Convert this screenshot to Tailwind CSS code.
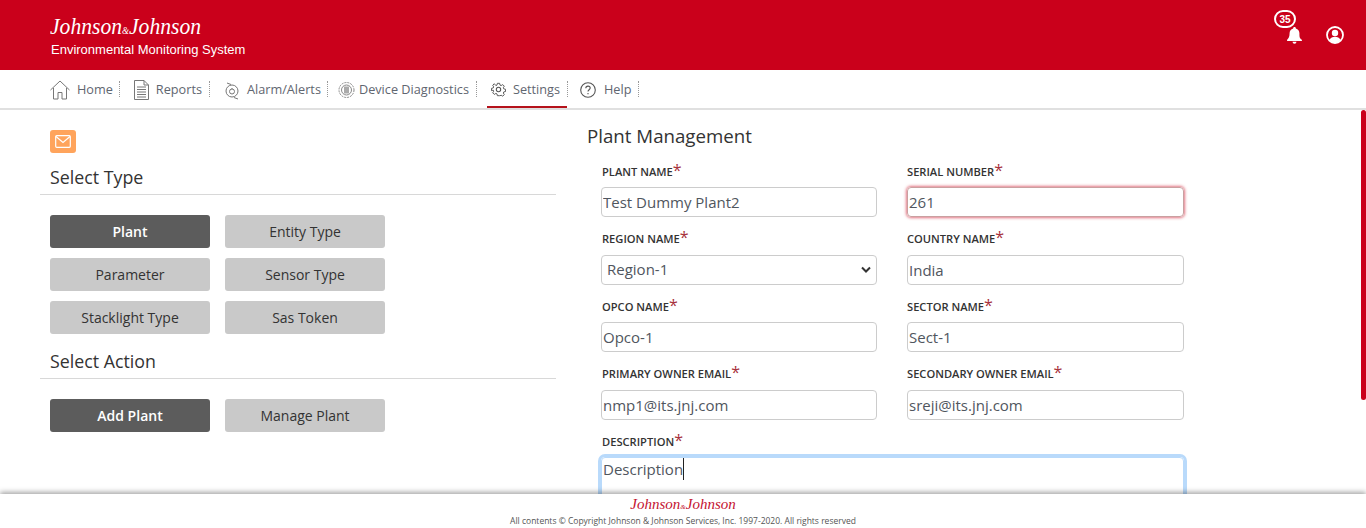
<!DOCTYPE html>
<html lang="en">
<head>
  <meta charset="UTF-8">
  <title>Environmental Monitoring System</title>
  <script src="https://cdn.jsdelivr.net/npm/@tailwindcss/browser@4"></script>
</head>
<body class="relative h-[528px] overflow-hidden bg-white font-['Open_Sans',sans-serif] text-[#333]">
  <!-- Header -->
  <header class="flex h-[70px] items-start justify-between bg-[#ca001b] pl-[50px] text-white">
    <div>
      <div class="mt-[10px] h-[32px] origin-left scale-x-[0.9] whitespace-nowrap font-['Liberation_Serif',serif] text-[24px] leading-[32px] italic">Johnson<span class="text-[10px]">&amp;</span>Johnson</div>
      <div class="ml-[1px] mt-[1px] font-['Liberation_Sans',sans-serif] text-[13px] leading-[14px]">Environmental Monitoring System</div>
    </div>
    <div class="relative mr-[22px] mt-[26px] flex items-center gap-[23px]">
      <span class="absolute left-[-12px] top-[-16px] flex h-[18px] w-[22px] items-center justify-center rounded-full border-2 border-white bg-[#ca001b] font-['Liberation_Sans',sans-serif] text-[10px] font-bold">35</span>
      <svg width="17" height="17" viewBox="0 0 18 19" fill="#fff"><path d="M9 0c-1 0-1.500.7-1.500 1.600C5 2.300 3.500 4.500 3.500 7c0 4-1 5.500-2.700 7.300-.5.600-.1 1.400.7 1.400h15c.8 0 1.200-.8.700-1.400C14.500 12.500 14.500 11 14.500 7c0-2.500-1.500-4.700-4-5.400C10.500.7 10 0 9 0zM6.800 16.500a2.200 2.200 0 0 0 4.400 0z"/></svg>
      <svg width="18" height="18" viewBox="0 0 18 18"><circle cx="9" cy="9" r="8" fill="none" stroke="#fff" stroke-width="1.800"/><circle cx="9" cy="7" r="3.200" fill="#fff"/><path d="M3.500 14c1-2.500 3-3.200 5.500-3.200s4.500.7 5.500 3.200C13 15.800 11 16.500 9 16.500S5 15.800 3.500 14z" fill="#fff"/></svg>
    </div>
  </header>

  <!-- Nav -->
  <nav class="flex h-[40px] items-center border-b-2 border-[#e0e0e0] pl-[50px] text-[12.7px] text-[#5f6670]">
    <a class="flex h-[38px] items-center gap-[7px] pt-[1px]">
      <svg width="20" height="20" viewBox="0 0 20 20" fill="none" stroke="#777" stroke-width="1"><path d="M.5 10 10 1l9.500 9M3.500 8v11h4.500v-6.500h4V19h4.500V8"/></svg>
      <span>Home</span>
    </a>
    <span class="ml-[6px] mr-[14px] h-[16px] border-r border-dotted border-[#999]"></span>
    <a class="flex h-[38px] items-center gap-[7px] pt-[1px]">
      <svg width="15" height="20" viewBox="0 0 15 20" fill="none" stroke="#777" stroke-width="1"><path d="M.5.500h9.500l4.500 4.500v14.500H.5zM10 .5V5h4.500M3 7h9M3 9.500h9M3 12h9M3 14.500h9M3 17h9"/></svg>
      <span>Reports</span>
    </a>
    <span class="ml-[7px] mr-[14px] h-[16px] border-r border-dotted border-[#999]"></span>
    <a class="flex h-[38px] items-center gap-[7px] pt-[1px]">
      <svg width="16" height="20" viewBox="0 0 16 20" fill="none" stroke="#777" stroke-width="1"><circle cx="8" cy="11" r="6"/><circle cx="8" cy="11.500" r="2.500"/><path d="M3 3l4 1.500M10 17.500l4 1.500M8 8v1"/></svg>
      <span>Alarm/Alerts</span>
    </a>
    <span class="ml-[6px] mr-[10px] h-[16px] border-r border-dotted border-[#999]"></span>
    <a class="flex h-[38px] items-center gap-[4px] pt-[1px]">
      <svg width="17" height="18" viewBox="0 0 17 18" fill="none" stroke="#888" stroke-width="1"><circle cx="8.500" cy="9" r="7.500" stroke-dasharray="2 1"/><circle cx="8.500" cy="9" r="5"/><rect x="6" y="5.500" width="5" height="7" fill="#aaa" stroke="none"/></svg>
      <span>Device Diagnostics</span>
    </a>
    <span class="ml-[7px] mr-[10px] h-[16px] border-r border-dotted border-[#999]"></span>
    <a class="relative flex h-[38px] items-center gap-[7px] pl-[4px] pr-[7px] pt-[1px] after:absolute after:inset-x-0 after:bottom-0 after:h-[2px] after:bg-[#b5121b]">
      <svg width="15" height="15" viewBox="0 0 24 24" fill="none" stroke="#555" stroke-width="1.700" stroke-linejoin="round"><circle cx="12" cy="12" r="3.500"/><path d="M10 1h4l.7 3.200 2 .8L19.500 3.300l2.800 2.800-1.700 2.800.8 2 3.100.7v4l-3.100.7-.8 2 1.700 2.800-2.800 2.800-2.800-1.700-2 .8L14 23h-4l-.7-3.200-2-.8-2.800 1.700-2.800-2.800 1.700-2.800-.8-2L-.5 14v-4l3.100-.7.8-2-1.700-2.800 2.800-2.800L7.300 5l2-.8z" transform="translate(1.200 1.200) scale(.9)"/></svg>
      <span>Settings</span>
    </a>
    <span class="mr-[12px] h-[16px] border-r border-dotted border-[#999]"></span>
    <a class="flex h-[38px] items-center gap-[8px] pt-[1px]">
      <svg width="16" height="16" viewBox="0 0 16 16" fill="none" stroke="#555" stroke-width="1.100"><circle cx="8" cy="8" r="7.300"/><path d="M5.800 6.200c0-1.300 1-2.100 2.200-2.100s2.200.8 2.200 2c0 1.600-2.200 1.700-2.200 3.400M8 11v1.200"/></svg>
      <span>Help</span>
    </a>
    <span class="ml-[7px] h-[16px] border-r border-dotted border-[#999]"></span>
  </nav>

  <!-- Main -->
  <main class="flex">
    <section class="ml-[40px] w-[516px] pt-[20px]">
      <div class="ml-[10px] flex h-[23px] w-[26px] items-center justify-center rounded-[3px] bg-[#ffa45c]">
        <svg width="16" height="13" viewBox="0 0 16 13" fill="none" stroke="#fff" stroke-width="1.200"><rect x=".7" y=".7" width="14.600" height="11.600" rx="1"/><path d="M1 1.500 8 7.500l7-6"/></svg>
      </div>
      <h2 class="mt-[12px] border-b border-[#d8d8d8] pb-[4px] pl-[10px] text-[17.8px] leading-[25px]">Select Type</h2>
      <div class="ml-[10px] mt-[20px] grid grid-cols-[160px_160px] gap-x-[15px] gap-y-[10px] text-[14px]">
        <button class="h-[33px] rounded-[3px] bg-[#5c5c5c] font-semibold text-white">Plant</button>
        <button class="h-[33px] rounded-[3px] bg-[#c9c9c9]">Entity Type</button>
        <button class="h-[33px] rounded-[3px] bg-[#c9c9c9]">Parameter</button>
        <button class="h-[33px] rounded-[3px] bg-[#c9c9c9]">Sensor Type</button>
        <button class="h-[33px] rounded-[3px] bg-[#c9c9c9]">Stacklight Type</button>
        <button class="h-[33px] rounded-[3px] bg-[#c9c9c9]">Sas Token</button>
      </div>
      <h2 class="mt-[15px] border-b border-[#d8d8d8] pb-[4px] pl-[10px] text-[17.8px] leading-[25px]">Select Action</h2>
      <div class="ml-[10px] mt-[20px] grid grid-cols-[160px_160px] gap-x-[15px] text-[14px]">
        <button class="h-[33px] rounded-[3px] bg-[#5c5c5c] font-semibold text-white">Add Plant</button>
        <button class="h-[33px] rounded-[3px] bg-[#c9c9c9]">Manage Plant</button>
      </div>
    </section>

    <section class="ml-[31px] pt-[12px]">
      <h1 class="text-[18.7px] leading-[28px]">Plant Management</h1>
      <form class="ml-[14px] mt-[11.75px] grid w-[583px] grid-cols-[276px_277px] gap-x-[30px] text-[15px] text-[#50565e]">
        <div class="h-[67.5px]">
          <label class="block h-[17px] pl-[1px] text-[11.15px] font-semibold leading-[17px] text-[#333]">PLANT NAME<span class="text-[16px] font-normal text-[#a8323c]">*</span></label>
          <input value="Test Dummy Plant2" class="mt-[8.25px] h-[30px] w-full rounded-[4px] border border-[#ccc] px-[1px] outline-none">
        </div>
        <div class="h-[67.5px]">
          <label class="block h-[17px] text-[11.15px] font-semibold leading-[17px] text-[#333]">SERIAL NUMBER<span class="text-[16px] font-normal text-[#a8323c]">*</span></label>
          <input value="261" class="mt-[8.25px] h-[30px] w-full rounded-[4px] border border-[#c9a0a0] px-[1px] shadow-[0_0_3px_1px_rgba(202,0,27,0.55)] outline-none">
        </div>
        <div class="h-[67.5px]">
          <label class="block h-[17px] pl-[1px] text-[11.15px] font-semibold leading-[17px] text-[#333]">REGION NAME<span class="text-[16px] font-normal text-[#a8323c]">*</span></label>
          <div class="relative mt-[8.25px] flex h-[30px] items-center rounded-[4px] border border-[#ccc] px-[5px]">
            <span>Region-1</span>
            <svg class="absolute right-[5px] top-[10px]" width="10" height="8" viewBox="0 0 10 8" fill="none" stroke="#333" stroke-width="2"><path d="M1 1.500 5 5.500l4-4"/></svg>
          </div>
        </div>
        <div class="h-[67.5px]">
          <label class="block h-[17px] text-[11.15px] font-semibold leading-[17px] text-[#333]">COUNTRY NAME<span class="text-[16px] font-normal text-[#a8323c]">*</span></label>
          <input value="India" class="mt-[8.25px] h-[30px] w-full rounded-[4px] border border-[#ccc] px-[1px] outline-none">
        </div>
        <div class="h-[67.5px]">
          <label class="block h-[17px] pl-[1px] text-[11.15px] font-semibold leading-[17px] text-[#333]">OPCO NAME<span class="text-[16px] font-normal text-[#a8323c]">*</span></label>
          <input value="Opco-1" class="mt-[8.25px] h-[30px] w-full rounded-[4px] border border-[#ccc] px-[1px] outline-none">
        </div>
        <div class="h-[67.5px]">
          <label class="block h-[17px] text-[11.15px] font-semibold leading-[17px] text-[#333]">SECTOR NAME<span class="text-[16px] font-normal text-[#a8323c]">*</span></label>
          <input value="Sect-1" class="mt-[8.25px] h-[30px] w-full rounded-[4px] border border-[#ccc] px-[1px] outline-none">
        </div>
        <div class="h-[67.5px]">
          <label class="block h-[17px] pl-[1px] text-[11.15px] font-semibold leading-[17px] text-[#333]">PRIMARY OWNER EMAIL<span class="text-[16px] font-normal text-[#a8323c]">*</span></label>
          <input value="nmp1@its.jnj.com" class="mt-[8.25px] h-[30px] w-full rounded-[4px] border border-[#ccc] px-[1px] outline-none">
        </div>
        <div class="h-[67.5px]">
          <label class="block h-[17px] text-[11.15px] font-semibold leading-[17px] text-[#333]">SECONDARY OWNER EMAIL<span class="text-[16px] font-normal text-[#a8323c]">*</span></label>
          <input value="sreji@its.jnj.com" class="mt-[8.25px] h-[30px] w-full rounded-[4px] border border-[#ccc] px-[1px] outline-none">
        </div>
        <div class="col-span-2">
          <label class="block h-[17px] pl-[1px] text-[11.15px] font-semibold leading-[17px] text-[#333]">DESCRIPTION<span class="text-[16px] font-normal text-[#a8323c]">*</span></label>
          <div class="mt-[8.25px] flex h-[60px] w-full items-start rounded-[4px] border border-[#b9dafb] px-[1px] leading-[22px] shadow-[0_0_0_3px_#b9dafb]">
            <span class="border-r border-[#222]">Description</span>
          </div>
        </div>
      </form>
    </section>
  </main>

  <!-- Scrollbar thumb -->
  <div class="absolute right-0 top-[110px] h-[290px] w-[5px] rounded-[3px] bg-[#ca001b]"></div>

  <!-- Footer -->
  <footer class="absolute inset-x-0 bottom-0 h-[34px] bg-white text-center shadow-[0_-2px_5px_rgba(0,0,0,0.35)]">
    <div class="h-[20px] font-['Liberation_Serif',serif] text-[15px] leading-[20px] text-[#c41230] italic">Johnson<span class="text-[7px]">&amp;</span>Johnson</div>
    <div class="mt-[1px] text-[8.500px] leading-[12px] text-[#555]">All contents © Copyright Johnson &amp; Johnson Services, Inc. 1997-2020. All rights reserved</div>
  </footer>
</body>
</html>
